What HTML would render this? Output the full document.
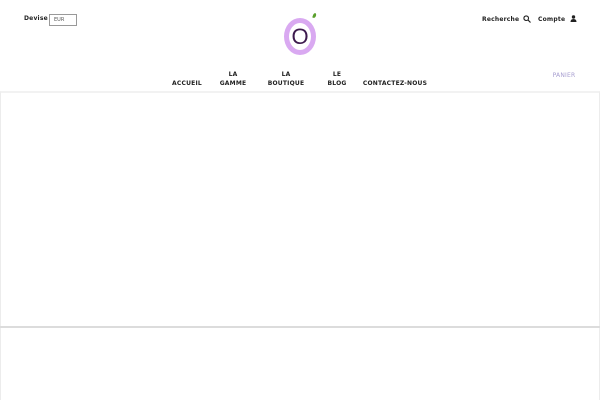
<!DOCTYPE html>
<html><head><meta charset="utf-8"><style>
*{margin:0;padding:0;box-sizing:border-box}
html,body{width:600px;height:400px;overflow:hidden}
body{background:#fff;font-family:"DejaVu Sans","Liberation Sans",sans-serif;position:relative;color:#222}
.t{position:absolute;font-size:6px;font-weight:bold;letter-spacing:.2px;line-height:8px}
.nav{position:absolute;font-size:6px;font-weight:bold;text-align:center;line-height:9px;letter-spacing:.2px;width:80px;margin-left:-40px}
</style></head><body>
<div class="t" style="left:24px;top:15px">Devise</div>
<div style="position:absolute;left:49px;top:14px;width:28px;height:12px;border:1px solid #999;font-size:5px;color:#555;padding:2px 0 0 4px;line-height:6px">EUR</div>
<div style="position:absolute;left:284px;top:18px;width:32px;height:37px;border-radius:50%;border:5px solid #d9a9f1;background:#fff"></div>
<div style="position:absolute;left:284px;top:20px;width:32px;font-size:22px;text-align:center;color:#3d1a4e;font-family:'Liberation Sans',sans-serif;line-height:34px">O</div>
<div style="position:absolute;left:313px;top:13px;width:3px;height:5px;background:#5aa02c;border-radius:50% 50% 50% 0;transform:rotate(20deg)"></div>
<div class="t" style="left:482px;top:16px">Recherche</div>
<svg style="position:absolute;left:523px;top:15px" width="8" height="8" viewBox="0 0 8 8"><circle cx="3.2" cy="3.2" r="2.3" fill="none" stroke="#222" stroke-width="1.1"/><path d="M5 5 L7.5 7.5" stroke="#222" stroke-width="1.2"/></svg>
<div class="t" style="left:538px;top:16px">Compte</div>
<svg style="position:absolute;left:570px;top:15px" width="7" height="7" viewBox="0 0 7 7"><circle cx="3.5" cy="2" r="1.7" fill="#222"/><path d="M0.5 7 Q0.5 4 3.5 4 Q6.5 4 6.5 7Z" fill="#222"/></svg>
<div class="nav" style="left:187px;top:79px">ACCUEIL</div>
<div class="nav" style="left:233px;top:70px">LA<br>GAMME</div>
<div class="nav" style="left:286px;top:70px">LA<br>BOUTIQUE</div>
<div class="nav" style="left:337px;top:70px">LE<br>BLOG</div>
<div class="nav" style="left:395px;top:79px">CONTACTEZ-NOUS</div>
<div class="nav" style="left:564px;top:71px;color:#a79ed0;font-weight:normal">PANIER</div>
<div style="position:absolute;left:0;top:91px;width:600px;height:237px;border:1px solid #ececec;border-top:2px solid #f2f2f2"></div>
<div style="position:absolute;left:0;top:326px;width:600px;height:2px;background:#dcdcdc"></div>
<div style="position:absolute;left:0;top:328px;width:600px;height:72px;border-left:1px solid #ececec;border-right:1px solid #ececec"></div>
</body></html>
